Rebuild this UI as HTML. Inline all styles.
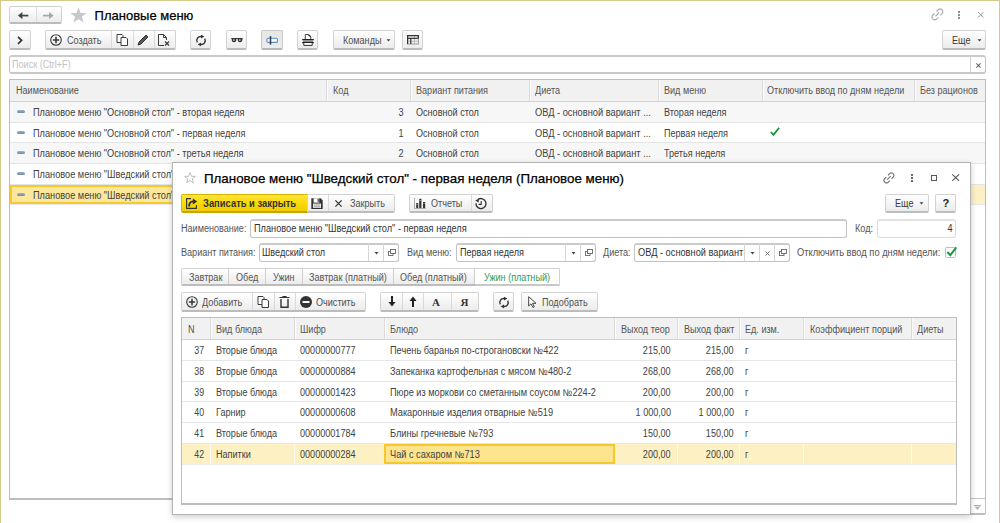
<!DOCTYPE html><html><head><meta charset="utf-8"><style>
*{box-sizing:border-box;margin:0;padding:0}
html,body{width:1000px;height:523px;overflow:hidden;background:#fff}
body{position:relative;font-family:"Liberation Sans",sans-serif;color:#505050}
.a{position:absolute}
.t{position:absolute;white-space:nowrap;font-size:10px;line-height:12px;transform:scaleX(.9075);transform-origin:0 0}
.t.r{transform-origin:100% 0}
.b{font-weight:bold}
.btn{position:absolute;border:1px solid #d2d2d2;border-bottom:2px solid #bcbcbc;border-radius:2px;background:linear-gradient(#ffffff,#f3f3f3 60%,#ececec)}
.dv{position:absolute;width:1px;background:#d6d6d6}
.inp{position:absolute;border:1px solid #c2c2c2;border-top:2px solid #cacaca;border-radius:3px;background:#fff}
svg{position:absolute;overflow:visible}
</style></head><body>
<div class="a" style="left:0px;top:0px;width:1000px;height:1px;background:#d4ca8e"></div>
<div class="a" style="left:0px;top:0px;width:1px;height:523px;background:#d4ca8e"></div>
<div class="a" style="left:999px;top:0px;width:1px;height:523px;background:#d4ca8e"></div>
<div class="btn" style="left:9px;top:6px;width:53px;height:18px;"></div>
<div class="a" style="left:36px;top:7px;width:1px;height:15px;background:#dcdcdc"></div>
<svg style="left:17.8px;top:11.8px" width="10.5" height="7.2" viewBox="0 0 10.5 7.2"><path d="M0 3.6 L4.4 0 V7.2 Z" fill="#444"/><rect x="3.8" y="2.75" width="6.6" height="1.7" fill="#444"/></svg>
<svg style="left:43.2px;top:11.8px" width="10.5" height="7.2" viewBox="0 0 10.5 7.2"><path d="M10.5 3.6 L6.1 0 V7.2 Z" fill="#a6a6a6"/><rect x="0" y="2.75" width="6.7" height="1.7" fill="#a6a6a6"/></svg>
<svg style="left:69.5px;top:7px" width="17" height="16" viewBox="0 0 17 16"><path d="M8.5 0.3 L10.6 5.9 L16.6 6.1 L11.9 9.8 L13.6 15.6 L8.5 12.3 L3.4 15.6 L5.1 9.8 L0.4 6.1 L6.4 5.9 Z" fill="#c9c9c9"/></svg>
<div class="t" style="top:9.90px;left:94.60px;color:#000;font-size:13px;transform:scaleX(1.0);-webkit-text-stroke:.25px #000">Плановые меню</div>
<svg style="left:931px;top:8px" width="13" height="13" viewBox="0 0 13 13"><g stroke="#aaaaaa" stroke-width="1.15" fill="none"><path d="M5.5 3.5 L7.5 1.5 Q9 0.3 10.6 1.5 L11.3 2.2 Q12.5 3.8 11.3 5.3 L9.3 7.3"/><path d="M7.3 9.3 L5.3 11.3 Q3.8 12.5 2.2 11.3 L1.5 10.6 Q0.3 9 1.5 7.5 L3.5 5.5"/><path d="M4.5 8.3 L8.3 4.5"/></g></svg>
<div class="a" style="left:958.2px;top:11px;width:1.6px;height:1.6px;background:#8f8f8f"></div>
<div class="a" style="left:958.2px;top:14px;width:1.6px;height:1.6px;background:#8f8f8f"></div>
<div class="a" style="left:958.2px;top:17px;width:1.6px;height:1.6px;background:#8f8f8f"></div>
<svg style="left:977.5px;top:11.5px" width="6" height="6" viewBox="0 0 6 6"><path d="M0 0 L5.5 5.5 M5.5 0 L0 5.5" stroke="#9a9a9a" stroke-width="1"/></svg>
<div class="btn" style="left:9px;top:30px;width:22px;height:20px;"></div>
<svg style="left:17.3px;top:35.7px" width="6" height="9" viewBox="0 0 6 9"><path d="M1 0.8 L4.6 4.3 L1 7.8" stroke="#333" stroke-width="1.7" fill="none"/></svg>
<div class="btn" style="left:45px;top:30px;width:131px;height:20px;"></div>
<div class="a" style="left:111px;top:31px;width:1px;height:17px;background:#dcdcdc"></div>
<div class="a" style="left:133px;top:31px;width:1px;height:17px;background:#dcdcdc"></div>
<div class="a" style="left:154px;top:31px;width:1px;height:17px;background:#dcdcdc"></div>
<svg style="left:50px;top:34px" width="12" height="12" viewBox="0 0 12 12"><circle cx="6" cy="6" r="5.3" stroke="#3a3a3a" stroke-width="1.1" fill="none"/><path d="M6 2.8 V9.2 M2.8 6 H9.2" stroke="#3a3a3a" stroke-width="1.6"/></svg>
<div class="t" style="top:35.13px;left:66.70px">Создать</div>
<svg style="left:115.5px;top:34px" width="13" height="12" viewBox="0 0 13 12"><path d="M1 0.5 H6 L7 1.5 V8.5 H1 Z" stroke="#3a3a3a" fill="#fff" stroke-width="1"/><path d="M5 3.5 H10 L11.5 5 V11.5 H5 Z" stroke="#3a3a3a" fill="#fff" stroke-width="1"/></svg>
<svg style="left:137px;top:34px" width="12" height="12" viewBox="0 0 12 12"><path d="M1 11 L2 8 L9 1 L11 3 L4 10 Z" stroke="#3a3a3a" fill="#555" stroke-width="1"/></svg>
<svg style="left:158px;top:34px" width="12" height="12" viewBox="0 0 12 12"><path d="M0.5 0.5 H5.5 L8.5 3.5 V6 M6 11.5 H0.5 V0.5" stroke="#3a3a3a" fill="none" stroke-width="1"/><path d="M5.5 0.5 V3.5 H8.5" stroke="#3a3a3a" fill="none"/><path d="M7 7.5 L11 11.5 M11 7.5 L7 11.5" stroke="#3a3a3a" stroke-width="1.2"/></svg>
<div class="btn" style="left:190px;top:30px;width:21px;height:20px;"></div>
<svg style="left:195.7px;top:34.6px" width="10" height="11" viewBox="0 0 10 11"><path d="M1.3 7.4 A4 4 0 0 1 5.3 1.5" stroke="#333" stroke-width="1.4" fill="none"/><path d="M5 -0.3 L8.4 1.6 L5 3.5 Z" fill="#333"/><path d="M8.7 3.6 A4 4 0 0 1 4.7 9.5" stroke="#333" stroke-width="1.4" fill="none"/><path d="M5 11.3 L1.6 9.4 L5 7.5 Z" fill="#333"/></svg>
<div class="btn" style="left:226px;top:30px;width:21px;height:20px;"></div>
<svg style="left:230.5px;top:37.5px" width="12" height="4.5" viewBox="0 0 12 4.5"><path d="M0.3 0.6 H11.7" stroke="#333" stroke-width="1.1"/><path d="M0.8 0.5 H5.2 V2.4 Q5.2 4.2 3 4.2 Q0.8 4.2 0.8 2.4 Z M6.8 0.5 H11.2 V2.4 Q11.2 4.2 9 4.2 Q6.8 4.2 6.8 2.4 Z" fill="#333"/><rect x="2.2" y="1.4" width="1.3" height="1.3" fill="#fff"/><rect x="8.2" y="1.4" width="1.3" height="1.3" fill="#fff"/></svg>
<div class="btn" style="left:261px;top:30px;width:22px;height:20px;background:linear-gradient(#e6e6e6,#ececec);border-color:#c8c8c8;border-bottom:2px solid #b8b8b8"></div>
<svg style="left:265.5px;top:35.5px" width="12" height="9" viewBox="0 0 12 9"><rect x="1" y="2.2" width="10.4" height="4.2" rx="1" stroke="#5a8fc0" stroke-width="1.1" fill="#fff"/><path d="M4.5 0.2 V8.6" stroke="#2a3a4a" stroke-width="1.5"/></svg>
<div class="btn" style="left:297px;top:30px;width:21px;height:20px;"></div>
<svg style="left:302px;top:34px" width="12" height="12" viewBox="0 0 12 12"><path d="M3.3 5 V0.5 H6.5 L8.8 3 V5" stroke="#333" stroke-width="0.9" fill="#fff"/><path d="M6.3 0.7 L8.8 2.8" stroke="#333" stroke-width="1.3"/><rect x="0.2" y="5" width="11.6" height="1.2" fill="#222"/><rect x="1" y="6.2" width="10" height="1.9" fill="#888"/><rect x="0.2" y="8" width="11.6" height="1.3" fill="#222"/><path d="M1.8 9 V11.4 H10.2 V9" stroke="#333" stroke-width="1" fill="#fff"/></svg>
<div class="btn" style="left:333px;top:30px;width:62px;height:20px;"></div>
<div class="t" style="top:35.13px;left:342.50px">Команды</div>
<svg style="left:385.5px;top:39px" width="5" height="3" viewBox="0 0 5 3"><path d="M0.5 0.2 H4.5 L2.5 2.6 Z" fill="#444"/></svg>
<div class="btn" style="left:402px;top:30px;width:21px;height:20px;"></div>
<svg style="left:406.5px;top:34.8px" width="12" height="9.5" viewBox="0 0 12 9.5"><rect x="0.6" y="0.6" width="10.8" height="8.4" stroke="#999" stroke-width="1" fill="none"/><path d="M0.6 3.5 H11.4 M0.6 6.2 H11.4 M7.5 0.6 V9" stroke="#bbb" stroke-width="1"/><path d="M0.6 9 V0.6 H11.4 V3.2" stroke="#333" stroke-width="1.2" fill="none"/><path d="M0.6 3.3 H11.4" stroke="#333" stroke-width="1.2"/><path d="M3.8 3.3 V9" stroke="#333" stroke-width="1.2"/></svg>
<div class="btn" style="left:942px;top:30px;width:44px;height:20px;"></div>
<div class="t" style="top:35.13px;left:952.00px;color:#3a3a3a">Еще</div>
<svg style="left:976.5px;top:39px" width="5" height="3" viewBox="0 0 5 3"><path d="M0.5 0.2 H4.5 L2.5 2.6 Z" fill="#444"/></svg>
<div class="inp" style="left:9px;top:55px;width:977px;height:19px;border-bottom:2px solid #c8c8c8"></div>
<div class="a" style="left:970px;top:56.5px;width:1px;height:16px;background:#d0d0d0"></div>
<div class="t" style="top:58.54px;left:11.50px;color:#c2c2c2">Поиск (Ctrl+F)</div>
<svg style="left:975.5px;top:62.5px" width="5" height="5" viewBox="0 0 5 5"><path d="M0.4 0.4 L4.6 4.6 M4.6 0.4 L0.4 4.6" stroke="#666" stroke-width="1.05"/></svg>
<div class="a" style="left:9px;top:79px;width:977px;height:421px;border:1px solid #bdbdbd;border-bottom:2px solid #bdbdbd;background:#fff"></div>
<div class="a" style="left:10px;top:80px;width:975px;height:22px;background:#f1f1f1;border-bottom:1px solid #d4d4d4"></div>
<div class="a" style="left:326px;top:80px;width:1px;height:21px;background:#dcdcdc"></div>
<div class="a" style="left:327px;top:80px;width:1px;height:21px;background:#fbfbfb"></div>
<div class="a" style="left:410px;top:80px;width:1px;height:21px;background:#dcdcdc"></div>
<div class="a" style="left:411px;top:80px;width:1px;height:21px;background:#fbfbfb"></div>
<div class="a" style="left:529px;top:80px;width:1px;height:21px;background:#dcdcdc"></div>
<div class="a" style="left:530px;top:80px;width:1px;height:21px;background:#fbfbfb"></div>
<div class="a" style="left:658px;top:80px;width:1px;height:21px;background:#dcdcdc"></div>
<div class="a" style="left:659px;top:80px;width:1px;height:21px;background:#fbfbfb"></div>
<div class="a" style="left:762px;top:80px;width:1px;height:21px;background:#dcdcdc"></div>
<div class="a" style="left:763px;top:80px;width:1px;height:21px;background:#fbfbfb"></div>
<div class="a" style="left:914px;top:80px;width:1px;height:21px;background:#dcdcdc"></div>
<div class="a" style="left:915px;top:80px;width:1px;height:21px;background:#fbfbfb"></div>
<div class="t" style="top:85.13px;left:15.50px;color:#555">Наименование</div>
<div class="t" style="top:85.13px;left:332.80px;color:#555">Код</div>
<div class="t" style="top:85.13px;left:416.20px;color:#555">Вариант питания</div>
<div class="t" style="top:85.13px;left:535.20px;color:#555">Диета</div>
<div class="t" style="top:85.13px;left:664.20px;color:#555">Вид меню</div>
<div class="t" style="top:85.13px;left:767.20px;color:#555">Отключить ввод по дням недели</div>
<div class="t" style="top:85.13px;left:920.00px;color:#555">Без рационов</div>
<div class="a" style="left:10px;top:102px;width:975px;height:21px;background:#f7f7f7;border-bottom:1px solid #e4e4e4"></div>
<div class="a" style="left:17px;top:110.0px;width:7.5px;height:3.3px;border-radius:1.6px;background:linear-gradient(#9bb6cc,#6a8aa6)"></div>
<div class="t" style="top:107.44px;left:32.80px;color:#424242;transform:scaleX(0.92)">Плановое меню "Основной стол" - вторая неделя</div>
<div class="t r" style="top:107.44px;right:596.00px;color:#424242">3</div>
<div class="t" style="top:107.44px;left:416.20px;color:#424242">Основной стол</div>
<div class="t" style="top:107.44px;left:535.20px;color:#424242;transform:scaleX(0.927)">ОВД - основной вариант ...</div>
<div class="t" style="top:107.44px;left:664.20px;color:#424242">Вторая неделя</div>
<div class="a" style="left:10px;top:123px;width:975px;height:20px;background:#ffffff;border-bottom:1px solid #e4e4e4"></div>
<div class="a" style="left:17px;top:131.0px;width:7.5px;height:3.3px;border-radius:1.6px;background:linear-gradient(#9bb6cc,#6a8aa6)"></div>
<div class="t" style="top:128.44px;left:32.80px;color:#424242;transform:scaleX(0.92)">Плановое меню "Основной стол" - первая неделя</div>
<div class="t r" style="top:128.44px;right:596.00px;color:#424242">1</div>
<div class="t" style="top:128.44px;left:416.20px;color:#424242">Основной стол</div>
<div class="t" style="top:128.44px;left:535.20px;color:#424242;transform:scaleX(0.927)">ОВД - основной вариант ...</div>
<div class="t" style="top:128.44px;left:664.20px;color:#424242">Первая неделя</div>
<svg style="left:770px;top:127.0px" width="10" height="9" viewBox="0 0 10 9"><path d="M0.8 5 L3.5 7.8 L9.2 0.8" stroke="#17963a" stroke-width="1.8" fill="none"/></svg>
<div class="a" style="left:10px;top:143px;width:975px;height:21px;background:#f7f7f7;border-bottom:1px solid #e4e4e4"></div>
<div class="a" style="left:17px;top:151.0px;width:7.5px;height:3.3px;border-radius:1.6px;background:linear-gradient(#9bb6cc,#6a8aa6)"></div>
<div class="t" style="top:148.44px;left:32.80px;color:#424242;transform:scaleX(0.92)">Плановое меню "Основной стол" - третья неделя</div>
<div class="t r" style="top:148.44px;right:596.00px;color:#424242">2</div>
<div class="t" style="top:148.44px;left:416.20px;color:#424242">Основной стол</div>
<div class="t" style="top:148.44px;left:535.20px;color:#424242;transform:scaleX(0.927)">ОВД - основной вариант ...</div>
<div class="t" style="top:148.44px;left:664.20px;color:#424242">Третья неделя</div>
<div class="a" style="left:10px;top:164px;width:975px;height:21px;background:#ffffff;border-bottom:1px solid #e4e4e4"></div>
<div class="a" style="left:17px;top:172.0px;width:7.5px;height:3.3px;border-radius:1.6px;background:linear-gradient(#9bb6cc,#6a8aa6)"></div>
<div class="t" style="top:169.44px;left:32.80px;color:#424242;transform:scaleX(0.92)">Плановое меню "Шведский стол" - первая неделя</div>
<div class="a" style="left:10px;top:185px;width:975px;height:20px;background:#fdf0c6;border-bottom:1px solid #e6e8ee"></div>
<div class="a" style="left:10px;top:185px;width:317px;height:19px;background:#fce79c;border:2px solid #f7c92c"></div>
<div class="a" style="left:17px;top:193.0px;width:7.5px;height:3.3px;border-radius:1.6px;background:linear-gradient(#9bb6cc,#6a8aa6)"></div>
<div class="t" style="top:190.44px;left:32.80px;color:#424242;transform:scaleX(0.92)">Плановое меню "Шведский стол" - вторая неделя</div>
<div class="a" style="left:970px;top:498px;width:16px;height:17px;border:1px solid #c4c4c4;border-bottom:2px solid #bdbdbd;border-radius:0 0 2px 0;background:#fff"></div>
<svg style="left:974px;top:504.5px" width="7" height="5" viewBox="0 0 7 5"><path d="M0 0.5 H7" stroke="#b0b0b0" stroke-width="1"/><path d="M0.5 1.5 H6.5 L3.5 5 Z" fill="#b4b4b4"/></svg>
<div class="a" style="left:172px;top:162px;width:799px;height:353px;background:#fff;border:1px solid #b4b4b4;box-shadow:0 2px 6px rgba(0,0,0,.2)"></div>
<svg style="left:183.5px;top:172px" width="12" height="11.5" viewBox="0 0 12 11.5"><path d="M6 0.6 L7.5 4.3 L11.4 4.4 L8.3 6.8 L9.4 10.8 L6 8.5 L2.6 10.8 L3.7 6.8 L0.6 4.4 L4.5 4.3 Z" fill="none" stroke="#b8b8b8" stroke-width="0.9"/></svg>
<div class="t" style="top:172.80px;left:204.00px;color:#000;font-size:13px;transform:scaleX(1.026);-webkit-text-stroke:.25px #000">Плановое меню "Шведский стол" - первая неделя (Плановое меню)</div>
<svg style="left:883px;top:172px" width="12" height="12" viewBox="0 0 13 13"><g stroke="#777" stroke-width="1.3" fill="none"><path d="M5.5 3.5 L7.5 1.5 Q9 0.3 10.6 1.5 L11.3 2.2 Q12.5 3.8 11.3 5.3 L9.3 7.3"/><path d="M7.3 9.3 L5.3 11.3 Q3.8 12.5 2.2 11.3 L1.5 10.6 Q0.3 9 1.5 7.5 L3.5 5.5"/><path d="M4.5 8.3 L8.3 4.5"/></g></svg>
<div class="a" style="left:911.2px;top:174px;width:1.6px;height:1.6px;background:#6a6a6a"></div>
<div class="a" style="left:911.2px;top:177px;width:1.6px;height:1.6px;background:#6a6a6a"></div>
<div class="a" style="left:911.2px;top:180px;width:1.6px;height:1.6px;background:#6a6a6a"></div>
<div class="a" style="left:930.5px;top:174.8px;width:6.6px;height:6.6px;border:1.4px solid #5a5a5a"></div>
<svg style="left:952px;top:174.2px" width="7.4" height="7.2" viewBox="0 0 7.4 7.2"><path d="M0.3 0.3 L7.1 6.9 M7.1 0.3 L0.3 6.9" stroke="#555" stroke-width="1.1"/></svg>
<div class="a" style="left:181px;top:194px;width:127px;height:19px;background:linear-gradient(#ffe43a,#f8d800 60%,#f0cc00);border:1px solid #d8b400;border-bottom:2px solid #c8a400;border-radius:2px 0 0 2px"></div>
<svg style="left:186px;top:198px" width="12" height="11" viewBox="0 0 12 11"><path d="M5 0.6 H0.6 V10.4 H10.4 V7" stroke="#333" stroke-width="1.1" fill="none"/><path d="M3.2 8.5 Q2.8 3.6 7.2 3.4" stroke="#2a2f45" stroke-width="1.9" fill="none"/><path d="M6.8 0.4 L11.2 3.5 L6.8 6.4 Z" fill="#2a2f45"/></svg>
<div class="t b" style="top:197.16px;left:202.70px;color:#333;font-size:10.5px;transform:scaleX(0.895)">Записать и закрыть</div>
<div class="btn" style="left:307px;top:194px;width:88px;height:19px;border-radius:0 2px 2px 0"></div>
<div class="a" style="left:328px;top:195px;width:1px;height:16px;background:#dadada"></div>
<svg style="left:311px;top:197.7px" width="12" height="11.2" viewBox="0 0 12 11.2"><path d="M0.3 0.3 H9.6 L11.7 2.4 V11 H0.3 Z" fill="#333"/><rect x="2.6" y="0.3" width="5.6" height="4.3" fill="#fff"/><rect x="6.6" y="0.9" width="1.2" height="3" fill="#333"/><rect x="2" y="5.6" width="8" height="4.3" fill="#fff"/><path d="M2.6 7 H9.4 M2.6 8.8 H9.4" stroke="#888" stroke-width="0.9"/></svg>
<svg style="left:335px;top:200px" width="7" height="7" viewBox="0 0 7 7"><path d="M0.4 0.4 L6.6 6.6 M6.6 0.4 L0.4 6.6" stroke="#333" stroke-width="1.25"/></svg>
<div class="t" style="top:198.34px;left:349.70px">Закрыть</div>
<div class="btn" style="left:409px;top:194px;width:84px;height:19px;"></div>
<div class="a" style="left:471px;top:195px;width:1px;height:16px;background:#dadada"></div>
<svg style="left:413.5px;top:198px" width="12" height="11" viewBox="0 0 12 11"><path d="M0.5 0 V10.5 H11.8" stroke="#999" stroke-width="0.8" fill="none"/><rect x="2.2" y="5" width="2" height="5" fill="#333"/><rect x="5.2" y="0.8" width="2.2" height="9.2" fill="#333"/><rect x="9" y="4" width="2.2" height="6" fill="#333"/><rect x="2.6" y="5.8" width="1" height="1" fill="#bbb"/><rect x="5.7" y="2" width="1" height="1" fill="#bbb"/><rect x="9.5" y="5" width="1" height="1" fill="#bbb"/></svg>
<div class="t" style="top:198.34px;left:430.60px">Отчеты</div>
<svg style="left:475px;top:197.7px" width="12" height="12" viewBox="0 0 12 12"><path d="M3.2 1.4 A5 5 0 1 1 1 5.2" stroke="#333" stroke-width="1.35" fill="none"/><path d="M0.2 2.6 L4 0.6 L3.6 4.6 Z" fill="#333"/><path d="M6.2 3 V6.4 H3.6" stroke="#333" stroke-width="1.1" fill="none"/></svg>
<div class="btn" style="left:885px;top:194px;width:44px;height:19px;"></div>
<div class="t" style="top:198.34px;left:895.00px;color:#3a3a3a">Еще</div>
<svg style="left:918.5px;top:202px" width="5" height="3" viewBox="0 0 5 3"><path d="M0.5 0.2 H4.5 L2.5 2.6 Z" fill="#444"/></svg>
<div class="btn" style="left:935px;top:194px;width:21px;height:19px;"></div>
<div class="t b" style="top:196.99px;left:942.50px;color:#222;font-size:11px;transform:scaleX(1)">?</div>
<div class="t" style="top:222.84px;left:181.30px;color:#555">Наименование:</div>
<div class="inp" style="left:250px;top:219px;width:597px;height:19px;"></div>
<div class="t" style="top:222.84px;left:253.70px;color:#333;transform:scaleX(0.92)">Плановое меню "Шведский стол" - первая неделя</div>
<div class="t" style="top:222.84px;left:854.80px;color:#555">Код:</div>
<div class="inp" style="left:877px;top:219px;width:79px;height:19px;border-color:#dcdcdc;border-top-color:#e2e2e2"></div>
<div class="t r" style="top:222.84px;right:47.30px;color:#333">4</div>
<div class="t" style="top:246.84px;left:181.30px;color:#555">Вариант питания:</div>
<div class="inp" style="left:259px;top:243px;width:140px;height:19px;"></div>
<div class="a" style="left:368px;top:244px;width:1px;height:17px;background:#d6d6d6"></div>
<div class="a" style="left:383px;top:244px;width:1px;height:17px;background:#d6d6d6"></div>
<div class="t" style="top:246.84px;left:262.00px;color:#333">Шведский стол</div>
<svg style="left:373.5px;top:252px" width="5" height="3" viewBox="0 0 5 3"><path d="M0.5 0 H4.5 L2.5 2.5 Z" fill="#444"/></svg>
<svg style="left:387.5px;top:249px" width="8" height="7" viewBox="0 0 8 7"><rect x="0.5" y="2.5" width="4.5" height="4" stroke="#666" fill="#fff" stroke-width="0.9"/><rect x="2.5" y="0.5" width="5" height="4" stroke="#666" fill="#fff" stroke-width="0.9"/></svg>
<div class="t" style="top:246.84px;left:406.60px;color:#555">Вид меню:</div>
<div class="inp" style="left:456px;top:243px;width:140px;height:19px;"></div>
<div class="a" style="left:565px;top:244px;width:1px;height:17px;background:#d6d6d6"></div>
<div class="a" style="left:580px;top:244px;width:1px;height:17px;background:#d6d6d6"></div>
<div class="t" style="top:246.84px;left:459.50px;color:#333">Первая неделя</div>
<svg style="left:570.5px;top:252px" width="5" height="3" viewBox="0 0 5 3"><path d="M0.5 0 H4.5 L2.5 2.5 Z" fill="#444"/></svg>
<svg style="left:584.5px;top:249px" width="8" height="7" viewBox="0 0 8 7"><rect x="0.5" y="2.5" width="4.5" height="4" stroke="#666" fill="#fff" stroke-width="0.9"/><rect x="2.5" y="0.5" width="5" height="4" stroke="#666" fill="#fff" stroke-width="0.9"/></svg>
<div class="t" style="top:246.84px;left:603.00px;color:#555">Диета:</div>
<div class="inp" style="left:634px;top:243px;width:156px;height:19px;"></div>
<div class="a" style="left:744px;top:244px;width:1px;height:17px;background:#d6d6d6"></div>
<div class="a" style="left:759px;top:244px;width:1px;height:17px;background:#d6d6d6"></div>
<div class="a" style="left:774px;top:244px;width:1px;height:17px;background:#d6d6d6"></div>
<div class="t" style="top:246.84px;left:637.50px;color:#333;transform:scaleX(0.924)">ОВД - основной вариант</div>
<svg style="left:749.5px;top:252px" width="5" height="3" viewBox="0 0 5 3"><path d="M0.5 0 H4.5 L2.5 2.5 Z" fill="#444"/></svg>
<svg style="left:764.5px;top:250.5px" width="5" height="5" viewBox="0 0 5 5"><path d="M0.5 0.5 L4.5 4.5 M4.5 0.5 L0.5 4.5" stroke="#666" stroke-width="0.9"/></svg>
<svg style="left:778.5px;top:249px" width="8" height="7" viewBox="0 0 8 7"><rect x="0.5" y="2.5" width="4.5" height="4" stroke="#666" fill="#fff" stroke-width="0.9"/><rect x="2.5" y="0.5" width="5" height="4" stroke="#666" fill="#fff" stroke-width="0.9"/></svg>
<div class="t" style="top:246.84px;left:796.50px;color:#555;transform:scaleX(0.93)">Отключить ввод по дням недели:</div>
<div class="a" style="left:945px;top:247px;width:11px;height:11px;border:1.5px solid #bdbdbd;border-radius:1.5px;background:#fff"></div>
<svg style="left:945px;top:244.5px" width="12" height="12" viewBox="0 0 12 12"><path d="M2.3 7 L5.3 10.2 L11.3 2.4" stroke="#17963a" stroke-width="1.9" fill="none"/></svg>
<div class="btn" style="left:181px;top:268px;width:379px;height:18px;border-radius:2px"></div>
<div class="a" style="left:228px;top:269px;width:1px;height:15px;background:#d0d0d0"></div>
<div class="a" style="left:265px;top:269px;width:1px;height:15px;background:#d0d0d0"></div>
<div class="a" style="left:302px;top:269px;width:1px;height:15px;background:#d0d0d0"></div>
<div class="a" style="left:393px;top:269px;width:1px;height:15px;background:#d0d0d0"></div>
<div class="a" style="left:474px;top:269px;width:1px;height:15px;background:#d0d0d0"></div>
<div class="a" style="left:475px;top:268px;width:85px;height:18px;background:#fff;border:1px solid #d2d2d2;border-left:none;border-bottom:2px solid #c8c8c8;border-radius:0 2px 2px 0"></div>
<div class="t" style="top:271.53px;left:188.80px;color:#555">Завтрак</div>
<div class="t" style="top:271.53px;left:235.50px;color:#555">Обед</div>
<div class="t" style="top:271.53px;left:272.50px;color:#555">Ужин</div>
<div class="t" style="top:271.53px;left:309.30px;color:#555">Завтрак (платный)</div>
<div class="t" style="top:271.53px;left:400.30px;color:#555">Обед (платный)</div>
<div class="t" style="top:271.53px;left:483.50px;color:#2e9e5e">Ужин (платный)</div>
<div class="btn" style="left:181px;top:292px;width:185px;height:20px;"></div>
<div class="a" style="left:252px;top:293px;width:1px;height:17px;background:#dadada"></div>
<div class="a" style="left:274px;top:293px;width:1px;height:17px;background:#dadada"></div>
<div class="a" style="left:295px;top:293px;width:1px;height:17px;background:#dadada"></div>
<svg style="left:186px;top:296px" width="12" height="12" viewBox="0 0 12 12"><circle cx="6" cy="6" r="5.3" stroke="#3a3a3a" stroke-width="1.1" fill="none"/><path d="M6 2.8 V9.2 M2.8 6 H9.2" stroke="#3a3a3a" stroke-width="1.6"/></svg>
<div class="t" style="top:296.83px;left:202.40px">Добавить</div>
<svg style="left:257px;top:296px" width="13" height="12" viewBox="0 0 13 12"><path d="M1 0.5 H6 L7 1.5 V8.5 H1 Z" stroke="#3a3a3a" fill="#fff" stroke-width="1"/><path d="M5 3.5 H10 L11.5 5 V11.5 H5 Z" stroke="#3a3a3a" fill="#fff" stroke-width="1"/></svg>
<svg style="left:279px;top:296px" width="11" height="12" viewBox="0 0 11 12"><path d="M0.5 1.5 H10.5 M4 1.5 V0.5 H7 V1.5" stroke="#333" stroke-width="1.2" fill="none"/><path d="M2 3 V11.3 H9 V3" stroke="#333" stroke-width="1.4" fill="none"/></svg>
<svg style="left:300px;top:296px" width="12" height="12" viewBox="0 0 12 12"><circle cx="6" cy="6" r="6" fill="#333"/><rect x="2.5" y="5" width="7" height="2" fill="#fff"/></svg>
<div class="t" style="top:296.83px;left:316.00px">Очистить</div>
<div class="btn" style="left:380px;top:292px;width:99px;height:20px;"></div>
<div class="a" style="left:402px;top:293px;width:1px;height:17px;background:#dadada"></div>
<div class="a" style="left:423px;top:293px;width:1px;height:17px;background:#dadada"></div>
<div class="a" style="left:451px;top:293px;width:1px;height:17px;background:#dadada"></div>
<svg style="left:388px;top:296px" width="8" height="11" viewBox="0 0 8 11"><path d="M4 0 V7" stroke="#222" stroke-width="2"/><path d="M0.5 6 H7.5 L4 10.5 Z" fill="#222"/></svg>
<svg style="left:409px;top:296px" width="8" height="11" viewBox="0 0 8 11"><path d="M4 11 V4" stroke="#222" stroke-width="2"/><path d="M0.5 5 H7.5 L4 0.5 Z" fill="#222"/></svg>
<div class="t b" style="left:432px;top:296px;font-family:'Liberation Serif',serif;font-size:11px;color:#333;transform:none">A</div>
<div class="t b" style="left:460.5px;top:296px;font-family:'Liberation Serif',serif;font-size:11px;color:#333;transform:none">Я</div>
<div class="btn" style="left:493px;top:292px;width:21px;height:20px;"></div>
<svg style="left:498.8px;top:296.6px" width="10" height="11" viewBox="0 0 10 11"><path d="M1.3 7.4 A4 4 0 0 1 5.3 1.5" stroke="#333" stroke-width="1.4" fill="none"/><path d="M5 -0.3 L8.4 1.6 L5 3.5 Z" fill="#333"/><path d="M8.7 3.6 A4 4 0 0 1 4.7 9.5" stroke="#333" stroke-width="1.4" fill="none"/><path d="M5 11.3 L1.6 9.4 L5 7.5 Z" fill="#333"/></svg>
<div class="btn" style="left:521px;top:292px;width:77px;height:20px;"></div>
<svg style="left:528px;top:296px" width="9" height="12" viewBox="0 0 9 12"><path d="M0.7 0.7 V10 L3 7.8 L5 11.5 L6.3 10.8 L4.5 7.3 H8 Z" stroke="#444" stroke-width="1" fill="#fff"/></svg>
<div class="t" style="top:296.83px;left:542.20px">Подобрать</div>
<div class="a" style="left:181px;top:317px;width:776px;height:188px;border:1px solid #bdbdbd;border-bottom:2px solid #bdbdbd;background:#fff"></div>
<div class="a" style="left:182px;top:318px;width:774px;height:22px;background:#f1f1f1;border-bottom:1px solid #d4d4d4"></div>
<div class="a" style="left:210px;top:318px;width:1px;height:21px;background:#dcdcdc"></div>
<div class="a" style="left:211px;top:318px;width:1px;height:21px;background:#fbfbfb"></div>
<div class="a" style="left:294px;top:318px;width:1px;height:21px;background:#dcdcdc"></div>
<div class="a" style="left:295px;top:318px;width:1px;height:21px;background:#fbfbfb"></div>
<div class="a" style="left:384px;top:318px;width:1px;height:21px;background:#dcdcdc"></div>
<div class="a" style="left:385px;top:318px;width:1px;height:21px;background:#fbfbfb"></div>
<div class="a" style="left:614px;top:318px;width:1px;height:21px;background:#dcdcdc"></div>
<div class="a" style="left:615px;top:318px;width:1px;height:21px;background:#fbfbfb"></div>
<div class="a" style="left:677px;top:318px;width:1px;height:21px;background:#dcdcdc"></div>
<div class="a" style="left:678px;top:318px;width:1px;height:21px;background:#fbfbfb"></div>
<div class="a" style="left:739px;top:318px;width:1px;height:21px;background:#dcdcdc"></div>
<div class="a" style="left:740px;top:318px;width:1px;height:21px;background:#fbfbfb"></div>
<div class="a" style="left:803px;top:318px;width:1px;height:21px;background:#dcdcdc"></div>
<div class="a" style="left:804px;top:318px;width:1px;height:21px;background:#fbfbfb"></div>
<div class="a" style="left:911px;top:318px;width:1px;height:21px;background:#dcdcdc"></div>
<div class="a" style="left:912px;top:318px;width:1px;height:21px;background:#fbfbfb"></div>
<div class="t" style="top:323.83px;left:187.70px;color:#555">N</div>
<div class="t" style="top:323.83px;left:216.20px;color:#555">Вид блюда</div>
<div class="t" style="top:323.83px;left:300.20px;color:#555">Шифр</div>
<div class="t" style="top:323.83px;left:390.20px;color:#555">Блюдо</div>
<div class="t" style="top:323.83px;left:620.70px;color:#555">Выход теор</div>
<div class="t" style="top:323.83px;left:683.50px;color:#555">Выход факт</div>
<div class="t" style="top:323.83px;left:745.30px;color:#555">Ед. изм.</div>
<div class="t" style="top:323.83px;left:809.70px;color:#555">Коэффициент порций</div>
<div class="t" style="top:323.83px;left:917.00px;color:#555">Диеты</div>
<div class="a" style="left:182px;top:340px;width:774px;height:21px;border-bottom:1px solid #e6e6e6"></div>
<div class="t r" style="top:345.13px;right:795.80px;color:#424242;transform:scaleX(0.88)">37</div>
<div class="t" style="top:345.13px;left:216.20px;color:#424242">Вторые блюда</div>
<div class="t" style="top:345.13px;left:300.20px;color:#424242">00000000777</div>
<div class="t" style="top:345.13px;left:390.20px;color:#424242;transform:scaleX(0.92)">Печень баранья по-строгановски №422</div>
<div class="t r" style="top:345.13px;right:329.30px;color:#424242">215,00</div>
<div class="t r" style="top:345.13px;right:266.50px;color:#424242">215,00</div>
<div class="t" style="top:345.13px;left:745.30px;color:#424242">г</div>
<div class="a" style="left:182px;top:361px;width:774px;height:21px;border-bottom:1px solid #e6e6e6"></div>
<div class="t r" style="top:366.13px;right:795.80px;color:#424242;transform:scaleX(0.88)">38</div>
<div class="t" style="top:366.13px;left:216.20px;color:#424242">Вторые блюда</div>
<div class="t" style="top:366.13px;left:300.20px;color:#424242">00000000884</div>
<div class="t" style="top:366.13px;left:390.20px;color:#424242;transform:scaleX(0.92)">Запеканка картофельная с мясом №480-2</div>
<div class="t r" style="top:366.13px;right:329.30px;color:#424242">268,00</div>
<div class="t r" style="top:366.13px;right:266.50px;color:#424242">268,00</div>
<div class="t" style="top:366.13px;left:745.30px;color:#424242">г</div>
<div class="a" style="left:182px;top:382px;width:774px;height:20px;border-bottom:1px solid #e6e6e6"></div>
<div class="t r" style="top:387.13px;right:795.80px;color:#424242;transform:scaleX(0.88)">39</div>
<div class="t" style="top:387.13px;left:216.20px;color:#424242">Вторые блюда</div>
<div class="t" style="top:387.13px;left:300.20px;color:#424242">00000001423</div>
<div class="t" style="top:387.13px;left:390.20px;color:#424242;transform:scaleX(0.92)">Пюре из моркови со сметанным соусом №224-2</div>
<div class="t r" style="top:387.13px;right:329.30px;color:#424242">200,00</div>
<div class="t r" style="top:387.13px;right:266.50px;color:#424242">200,00</div>
<div class="t" style="top:387.13px;left:745.30px;color:#424242">г</div>
<div class="a" style="left:182px;top:402px;width:774px;height:21px;border-bottom:1px solid #e6e6e6"></div>
<div class="t r" style="top:407.13px;right:795.80px;color:#424242;transform:scaleX(0.88)">40</div>
<div class="t" style="top:407.13px;left:216.20px;color:#424242">Гарнир</div>
<div class="t" style="top:407.13px;left:300.20px;color:#424242">00000000608</div>
<div class="t" style="top:407.13px;left:390.20px;color:#424242;transform:scaleX(0.92)">Макаронные изделия отварные №519</div>
<div class="t r" style="top:407.13px;right:329.30px;color:#424242">1 000,00</div>
<div class="t r" style="top:407.13px;right:266.50px;color:#424242">1 000,00</div>
<div class="t" style="top:407.13px;left:745.30px;color:#424242">г</div>
<div class="a" style="left:182px;top:423px;width:774px;height:21px;border-bottom:1px solid #e6e6e6"></div>
<div class="t r" style="top:428.13px;right:795.80px;color:#424242;transform:scaleX(0.88)">41</div>
<div class="t" style="top:428.13px;left:216.20px;color:#424242">Вторые блюда</div>
<div class="t" style="top:428.13px;left:300.20px;color:#424242">00000001784</div>
<div class="t" style="top:428.13px;left:390.20px;color:#424242;transform:scaleX(0.92)">Блины гречневые №793</div>
<div class="t r" style="top:428.13px;right:329.30px;color:#424242">150,00</div>
<div class="t r" style="top:428.13px;right:266.50px;color:#424242">150,00</div>
<div class="t" style="top:428.13px;left:745.30px;color:#424242">г</div>
<div class="a" style="left:182px;top:444px;width:774px;height:21px;background:#fdf1c4;border-bottom:1px solid #ececec"></div>
<div class="a" style="left:210px;top:444px;width:1px;height:20px;background:#fffaf0"></div>
<div class="a" style="left:294px;top:444px;width:1px;height:20px;background:#fffaf0"></div>
<div class="a" style="left:384px;top:444px;width:1px;height:20px;background:#fffaf0"></div>
<div class="a" style="left:614px;top:444px;width:1px;height:20px;background:#fffaf0"></div>
<div class="a" style="left:677px;top:444px;width:1px;height:20px;background:#fffaf0"></div>
<div class="a" style="left:739px;top:444px;width:1px;height:20px;background:#fffaf0"></div>
<div class="a" style="left:803px;top:444px;width:1px;height:20px;background:#fffaf0"></div>
<div class="a" style="left:911px;top:444px;width:1px;height:20px;background:#fffaf0"></div>
<div class="a" style="left:384px;top:444px;width:231px;height:20px;background:#fde48f;border:2px solid #f6c828"></div>
<div class="t r" style="top:449.13px;right:795.80px;color:#424242;transform:scaleX(0.88)">42</div>
<div class="t" style="top:449.13px;left:216.20px;color:#424242">Напитки</div>
<div class="t" style="top:449.13px;left:300.20px;color:#424242">00000000284</div>
<div class="t" style="top:449.13px;left:390.20px;color:#424242;transform:scaleX(0.92)">Чай с сахаром №713</div>
<div class="t r" style="top:449.13px;right:329.30px;color:#424242">200,00</div>
<div class="t r" style="top:449.13px;right:266.50px;color:#424242">200,00</div>
<div class="t" style="top:449.13px;left:745.30px;color:#424242">г</div>
</body></html>
